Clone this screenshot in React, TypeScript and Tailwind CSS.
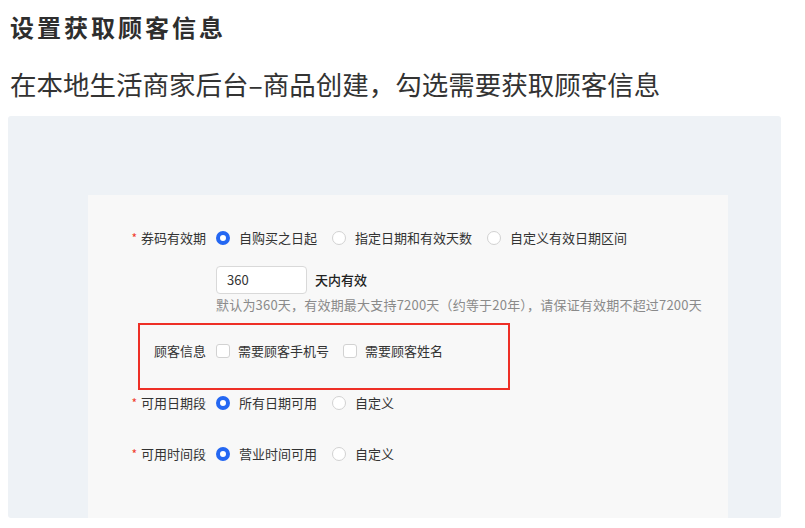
import React from "react";

const font = { fontFamily: '"Noto Sans CJK SC", "Noto Sans", sans-serif' };

function Radio({ checked, label }: { checked?: boolean; label: string }) {
  return (
    <div className="flex items-center mr-[15px]">
      <span
        className={`w-[14px] h-[14px] rounded-full bg-white shrink-0 ${
          checked ? "border-[4px] border-[#2467f2]" : "border border-[#d2d2d2]"
        }`}
      />
      <span className="ml-[9px] text-[13px] text-[#333]">{label}</span>
    </div>
  );
}

function Check({ label }: { label: string }) {
  return (
    <div className="flex items-center mr-[14px]">
      <span className="w-[14px] h-[14px] rounded-[3px] bg-white border border-[#d2d2d2] shrink-0" />
      <span className="ml-[8px] text-[13px] text-[#333]">{label}</span>
    </div>
  );
}

function Label({ text, required }: { text: string; required?: boolean }) {
  return (
    <div className="w-[128px] shrink-0 flex justify-end items-center pr-[10px] text-[13px] text-[#333]">
      {required && <span className="text-[#f03a2e] mr-[4px] text-[12px]">*</span>}
      {text}
    </div>
  );
}

export default function App() {
  return (
    <div
      className="relative w-[806px] h-[528px] bg-white overflow-hidden border-r border-[#f3c9c9]"
      style={font}
    >
      <div className="pt-[10px] pl-[10px] text-[24px] leading-[34px] font-bold tracking-[3px] text-[#2e2e2e]">
        设置获取顾客信息
      </div>
      <div className="mt-[23px] pl-[10px] text-[26.5px] leading-[34px] text-[#333]">
        在本地生活商家后台–商品创建，勾选需要获取顾客信息
      </div>

      <div className="mt-[15px] ml-[8px] w-[773px] h-[402px] bg-[#eef2f6] rounded-[3px] pt-[79px] pl-[80px]">
        <div className="w-[640px] h-full bg-[#f8f8f8] pt-[29px]">
          <div className="flex items-center h-[28px]">
            <Label text="券码有效期" required />
            <Radio checked label="自购买之日起" />
            <Radio label="指定日期和有效天数" />
            <Radio label="自定义有效日期区间" />
          </div>

          <div className="flex items-center mt-[14px] ml-[128px]">
            <div className="w-[91px] h-[28px] bg-white border border-[#d9d9d9] rounded-[4px] flex items-center pl-[10px] text-[13px] text-[#333]">
              360
            </div>
            <span className="ml-[8px] text-[13px] font-medium text-[#222]">天内有效</span>
          </div>

          <div className="mt-[2px] ml-[128px] text-[13px] leading-[18px] tracking-[0.2px] text-[#8a8a8a]">
            默认为360天，有效期最大支持7200天（约等于20年），请保证有效期不超过7200天
          </div>

          <div className="mt-[9px] ml-[50px] w-[372px] h-[67px] border-2 border-[#ee2f26] pt-[12px]">
            <div className="flex items-center h-[28px] -ml-[52px]">
              <Label text="顾客信息" />
              <Check label="需要顾客手机号" />
              <Check label="需要顾客姓名" />
            </div>
          </div>

          <div className="flex items-center h-[24px] mt-[1px]">
            <Label text="可用日期段" required />
            <Radio checked label="所有日期可用" />
            <Radio label="自定义" />
          </div>

          <div className="flex items-center h-[24px] mt-[27px]">
            <Label text="可用时间段" required />
            <Radio checked label="营业时间可用" />
            <Radio label="自定义" />
          </div>
        </div>
      </div>
    </div>
  );
}
